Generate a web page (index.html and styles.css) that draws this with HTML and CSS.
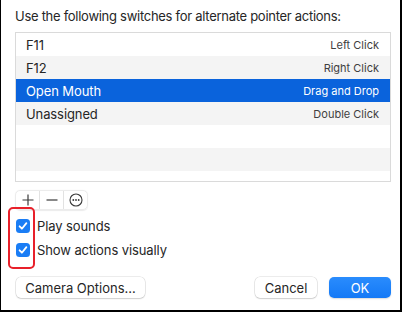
FILE: index.html
```html
<!DOCTYPE html>
<html lang="en">
<head>
    <meta charset="UTF-8">
    <title>Alternate Pointer Actions</title>
    <link rel="stylesheet" href="styles.css">
</head>
<body>
    <div class="dialog">
        <p class="prompt">Use the following switches for alternate pointer actions:</p>

        <div class="switch-list">
            <div class="row"><span class="name">F11</span><span class="action">Left Click</span></div>
            <div class="row alt"><span class="name">F12</span><span class="action">Right Click</span></div>
            <div class="row selected"><span class="name">Open Mouth</span><span class="action">Drag and Drop</span></div>
            <div class="row alt"><span class="name">Unassigned</span><span class="action">Double Click</span></div>
            <div class="row"></div>
            <div class="row alt"></div>
            <div class="filler"></div>
        </div>

        <div class="list-tools">
            <span class="tool">
                <svg width="12" height="12" viewBox="0 0 12 12"><path d="M6 0.5v11M0.5 6h11" stroke="#3a3a3a" stroke-width="1.2" fill="none"/></svg>
            </span>
            <span class="tool">
                <svg width="12" height="12" viewBox="0 0 12 12"><path d="M0.5 6h11" stroke="#3a3a3a" stroke-width="1.2" fill="none"/></svg>
            </span>
            <span class="tool">
                <svg width="14" height="14" viewBox="0 0 14 14"><circle cx="7" cy="7" r="6" stroke="#3a3a3a" stroke-width="1.1" fill="none"/><circle cx="4.3" cy="7" r="0.9" fill="#3a3a3a"/><circle cx="7" cy="7" r="0.9" fill="#3a3a3a"/><circle cx="9.7" cy="7" r="0.9" fill="#3a3a3a"/></svg>
            </span>
        </div>

        <div class="options">
            <label class="check"><span class="box"><svg width="10" height="10" viewBox="0 0 10 10"><path d="M1.6 5.3l2.3 2.4 4.5-5.6" stroke="#fff" stroke-width="1.8" fill="none" stroke-linecap="round" stroke-linejoin="round"/></svg></span>Play sounds</label>
            <label class="check"><span class="box"><svg width="10" height="10" viewBox="0 0 10 10"><path d="M1.6 5.3l2.3 2.4 4.5-5.6" stroke="#fff" stroke-width="1.8" fill="none" stroke-linecap="round" stroke-linejoin="round"/></svg></span>Show actions visually</label>
            <div class="highlight"></div>
        </div>

        <div class="footer">
            <button class="btn camera">Camera Options...</button>
            <span class="spacer"></span>
            <button class="btn">Cancel</button>
            <button class="btn primary">OK</button>
        </div>
    </div>
</body>
</html>
```

FILE: styles.css
```css
html, body {
    margin: 0;
    padding: 0;
    background: #fff;
}
body {
    font-family: Inter, "Noto Sans", sans-serif;
    color: #262626;
}
.dialog {
    position: relative;
    box-sizing: border-box;
    width: 402px;
    height: 312px;
    padding: 8px 9px 0 14px;
    border-left: 1px solid #000;
    border-right: 2px solid #000;
    border-bottom: 2px solid #000;
}
.prompt {
    margin: 0;
    font-size: 13px;
    line-height: 16px;
    letter-spacing: -0.28px;
}
.switch-list {
    margin-top: 8px;
    border: 1px solid #dadada;
    background: #fff;
}
.row {
    display: flex;
    align-items: center;
    justify-content: space-between;
    height: 23px;
    padding: 0 11px 0 10px;
}
.row.alt {
    background: #f4f4f4;
}
.row.selected {
    background: #0a63dc;
    color: #fff;
}
.name {
    font-size: 13px;
    letter-spacing: -0.1px;
}
.action {
    font-size: 11px;
    color: #3f3f3f;
}
.selected .action {
    color: #fff;
}
.filler {
    height: 10px;
}
.list-tools {
    display: inline-flex;
    margin-top: 8px;
    height: 20px;
    border: 1px solid #ececec;
    border-radius: 5px;
    box-shadow: 0 0.5px 1px rgba(0,0,0,0.08);
    box-sizing: border-box;
}
.tool {
    display: flex;
    align-items: center;
    justify-content: center;
    width: 23px;
    height: 18px;
    border-left: 1px solid #e2e2e2;
}
.tool:first-child {
    border-left: none;
}
.tool svg {
    display: block;
}
.options {
    position: relative;
    margin-top: 4px;
}
.check {
    display: flex;
    align-items: center;
    height: 24px;
    font-size: 13px;
    letter-spacing: -0.1px;
}
.box {
    display: flex;
    align-items: center;
    justify-content: center;
    width: 14px;
    height: 14px;
    margin: 0 7px 0 1px;
    border-radius: 3.5px;
    background: #1a7df5;
}
.highlight {
    position: absolute;
    left: -7px;
    top: -7px;
    width: 23px;
    height: 58px;
    border: 2px solid #e8202a;
    border-radius: 5px;
}
.footer {
    display: flex;
    align-items: center;
    margin-top: 15px;
}
.spacer {
    flex: 1;
}
.btn {
    height: 21px;
    padding: 0;
    font-family: Inter, "Noto Sans", sans-serif;
    font-size: 13px;
    color: #262626;
    background: #fff;
    border: none;
    border-radius: 5px;
    box-shadow: 0 0 0 0.5px rgba(0,0,0,0.15), 0 1px 1.5px rgba(0,0,0,0.12);
    width: 62px;
    margin-left: 12px;
}
.btn.camera {
    width: 129px;
    margin-left: 1px;
}
.btn.primary {
    background: linear-gradient(#2a8cfd, #1479f6);
    color: #fff;
    box-shadow: 0 1px 1.5px rgba(0,0,0,0.15);
}
```
